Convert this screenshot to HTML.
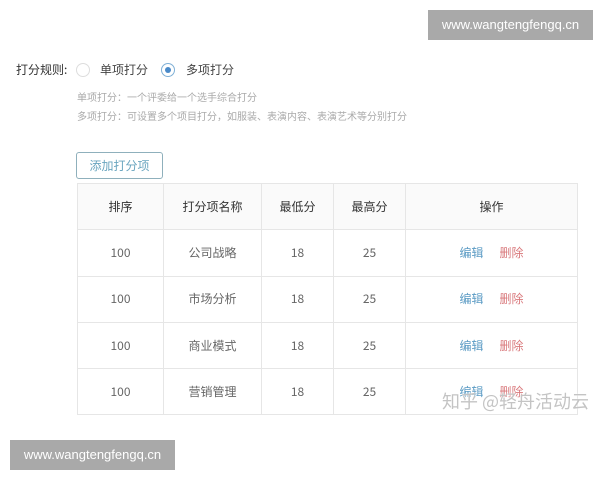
<!DOCTYPE html>
<html><head><meta charset="utf-8"><style>
*{margin:0;padding:0;box-sizing:border-box}
body{width:600px;height:480px;background:#fff;position:relative;overflow:hidden;font-family:"Noto Sans CJK SC","Liberation Sans",sans-serif;}
.wm{position:absolute;background:#a9a9a9;color:#fff;font-size:13px;line-height:30px;text-align:center;font-family:"Liberation Sans",sans-serif}
.abs{position:absolute;white-space:nowrap}
.radio{position:absolute;width:14px;height:14px;border-radius:50%;border:1px solid #ddd;background:#fff}
.radio.on{border-color:#7fb0d6}
.radio.on::after{content:"";position:absolute;left:3px;top:3px;width:6px;height:6px;border-radius:50%;background:#4a8ac9}
table{position:absolute;left:77px;top:183px;border-collapse:collapse;font-size:12px;color:#666;table-layout:fixed}
td,th{border:1px solid #e6e6e6;text-align:center;height:46.3px;font-weight:normal;line-height:16px;vertical-align:middle}
th{background:#fafafa;color:#333}
.e{color:#5b9bc4;margin-right:16px}
.d{color:#d9797c}
</style></head><body>
<div class="wm" style="left:428px;top:10px;width:165px;height:30px">www.wangtengfengq.cn</div>
<div class="abs" style="left:16px;top:61px;font-size:12px;color:#333">打分规则:</div>
<div class="radio" style="left:76px;top:63px"></div>
<div class="abs" style="left:100px;top:61px;font-size:12px;color:#444">单项打分</div>
<div class="radio on" style="left:161px;top:63px"></div>
<div class="abs" style="left:186px;top:61px;font-size:12px;color:#444">多项打分</div>
<div class="abs" style="left:77px;top:89px;font-size:10px;color:#aaa">单项打分：一个评委给一个选手综合打分</div>
<div class="abs" style="left:77px;top:108px;font-size:10px;color:#aaa">多项打分：可设置多个项目打分，如服装、表演内容、表演艺术等分别打分</div>
<div class="abs" style="left:76px;top:152px;width:87px;height:27px;border:1px solid #8fb0bc;border-radius:3px;font-size:12px;color:#6aa5bf;line-height:25px;text-align:center">添加打分项</div>
<table>
<colgroup><col style="width:86px"><col style="width:98px"><col style="width:72px"><col style="width:72px"><col style="width:172px"></colgroup>
<tr><th>排序</th><th>打分项名称</th><th>最低分</th><th>最高分</th><th>操作</th></tr>
<tr><td>100</td><td>公司战略</td><td>18</td><td>25</td><td><span class="e">编辑</span><span class="d">删除</span></td></tr>
<tr><td>100</td><td>市场分析</td><td>18</td><td>25</td><td><span class="e">编辑</span><span class="d">删除</span></td></tr>
<tr><td>100</td><td>商业模式</td><td>18</td><td>25</td><td><span class="e">编辑</span><span class="d">删除</span></td></tr>
<tr><td>100</td><td>营销管理</td><td>18</td><td>25</td><td><span class="e">编辑</span><span class="d">删除</span></td></tr>
</table>
<div class="abs" style="left:442px;top:388px;font-size:18px;color:#c4c4c4;text-shadow:0 0 2px #fff">知乎 @轻舟活动云</div>
<div class="wm" style="left:10px;top:440px;width:165px;height:30px">www.wangtengfengq.cn</div>
</body></html>
